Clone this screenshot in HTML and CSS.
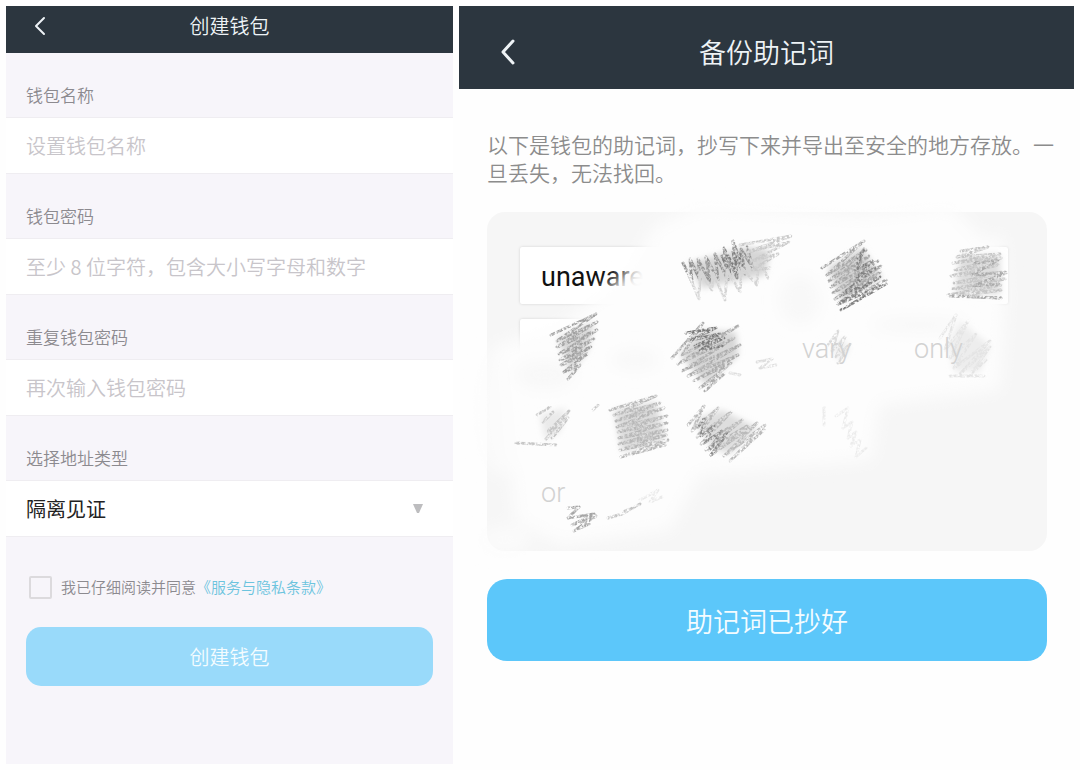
FILE: index.html
```
<!DOCTYPE html>
<html lang="zh-CN">
<head>
    <meta charset="UTF-8">
    <meta name="viewport" content="width=device-width, initial-scale=1.0">
    <title>创建钱包</title>
    <link rel="stylesheet" href="styles.css">
</head>
<body>

<div class="container">
    <!-- Create wallet -->
    <section class="create-section">
        <header class="top-bar">
            <button type="button" class="back-button" aria-label="返回">
                <svg width="12" height="20" viewBox="0 0 12 20"><path d="M10 2L2 10L10 18"/></svg>
            </button>
            <h1>创建钱包</h1>
        </header>
        <form id="create-form">
            <label class="field-label" for="wallet-name">钱包名称</label>
            <input type="text" id="wallet-name" class="input-field" placeholder="设置钱包名称">

            <label class="field-label" for="password">钱包密码</label>
            <input type="password" id="password" class="input-field" placeholder="至少 8 位字符，包含大小写字母和数字">

            <label class="field-label" for="password-repeat">重复钱包密码</label>
            <input type="password" id="password-repeat" class="input-field" placeholder="再次输入钱包密码">

            <label class="field-label" for="address-type">选择地址类型</label>
            <div class="select-wrap">
                <select id="address-type" class="input-field">
                    <option>隔离见证</option>
                </select>
                <svg class="select-arrow" width="10" height="9" viewBox="0 0 10 9"><path d="M0 0H10L6 9H4Z"/></svg>
            </div>

            <div class="terms">
                <input type="checkbox" id="agree">
                <label for="agree">我已仔细阅读并同意</label><a href="#">《服务与隐私条款》</a>
            </div>
            <button type="submit" class="create-button">创建钱包</button>
        </form>
    </section>

    <!-- Backup mnemonic -->
    <section class="backup-section">
        <header class="top-bar top-bar-large">
            <button type="button" class="back-button" aria-label="返回">
                <svg width="15" height="26" viewBox="0 0 15 26"><path d="M13 2L3 13L13 24"/></svg>
            </button>
            <h1>备份助记词</h1>
        </header>
        <p class="hint">以下是钱包的助记词，抄写下来并导出至安全的地方存放。一旦丢失，无法找回。</p>

        <div class="mnemonic">
            <ul class="words">
                <li>unaware</li><li></li><li></li><li></li>
                <li></li><li></li><li class="faint">vary</li><li class="faint">only</li>
                <li></li><li class="blank"></li><li class="blank"></li><li class="blank"></li>
                <li class="faint">or</li>
            </ul>
            <!-- Smudges and pencil strokes over the words -->
            <svg class="scribbles" viewBox="487 212 560 339" preserveAspectRatio="none" aria-hidden="true">
                <defs>
                    <filter id="haze" x="-20%" y="-20%" width="140%" height="140%">
                        <feGaussianBlur stdDeviation="8"/>
                    </filter>
                    <filter id="smudge" x="-20%" y="-20%" width="140%" height="140%">
                        <feGaussianBlur stdDeviation="3"/>
                    </filter>
                    <filter id="pencil" x="-10%" y="-10%" width="120%" height="120%">
                        <feTurbulence type="fractalNoise" baseFrequency="0.4" numOctaves="3" seed="4" result="noise"/>
                        <feColorMatrix in="noise" type="matrix" values="0 0 0 0 0  0 0 0 0 0  0 0 0 0 0  0 0 0 3 -0.9" result="grain"/>
                        <feComposite in="SourceGraphic" in2="grain" operator="in" result="drawn"/>
                        <feGaussianBlur in="drawn" stdDeviation="0.7"/>
                    </filter>
                </defs>
                <g filter="url(#haze)" fill="#fdfdfd">
                    <path d="M655 225L700 205L860 215L950 205L985 240L1003 235L1006 300L1000 390L880 405L872 460L780 468L700 475L670 530L560 545L515 520L505 400L498 345L560 326L600 295L625 275Z"/>
                    <ellipse cx="500" cy="410" rx="22" ry="65" opacity="0.8"/>
                    <ellipse cx="505" cy="540" rx="25" ry="14" opacity="0.8"/>
                </g>
                <g filter="url(#haze)" fill="#f8f8f8">
                    <ellipse cx="545" cy="375" rx="30" ry="14"/>
                    <ellipse cx="800" cy="300" rx="20" ry="24"/>
                    <ellipse cx="635" cy="360" rx="24" ry="10"/>
                    <ellipse cx="920" cy="325" rx="50" ry="8"/>
                </g>
                <!-- rubbed-in graphite under the strokes -->
                <g filter="url(#smudge)">
                    <path fill="#d6d6d6" d="M687 264L745 247L770 250L765 275L702 288Z"/>
                    <path fill="#d2d2d2" d="M828 268L862 248L882 278L842 302Z"/>
                    <path fill="#dedede" d="M960 256L1000 255L1000 294L955 293Z"/>
                    <path fill="#d8d8d8" d="M558 338L594 322L588 350L570 374Z"/>
                    <path fill="#d6d6d6" d="M680 355L700 330L736 332L738 355L706 385Z"/>
                    <path fill="#dcdcdc" d="M614 410L656 402L665 440L622 452Z"/>
                    <path fill="#dedede" d="M694 420L722 410L758 428L730 454L712 448Z"/>
                    <path fill="#ededed" d="M948 345L960 322L990 345L980 372L955 372Z"/>
                    <path fill="#eee" d="M832 350L842 338L850 348L840 362Z"/>
                    <path fill="#eaeaea" d="M540 415L566 408L560 432L545 440Z"/>
                </g>
                <g class="strokes" filter="url(#pencil)">
                    <!-- row 1 -->
                    <path stroke="#929292" d="M683 263L692 282L690 259L700 280L698 259L710 282L706 257L718 280L715 254L728 280L724 248L737 278L733 241L745 274L741 249L753 268L747 247"/>
                    <path stroke="#7d7d7d" d="M722 256L730 275L727 254L737 274L733 252L743 272L739 253"/>
                    <path stroke="#d4d4d4" d="M689 275L699 299L700 272L712 290L713 273L725 300L727 270L740 292L742 268L757 285L758 258L768 278"/>
                    <path stroke="#cacaca" d="M740 245L791 236L748 252L789 242L752 261L778 254L752 270L770 268"/>
                    <path stroke="#a8a8a8" d="M822 268L864 241L827 275L866 250L829 281L869 256L831 287L878 261L833 293L881 266L835 299L880 272L838 304L886 280"/>
                    <path stroke="#828282" d="M858 258L864 249L855 270L872 261L856 279L875 268L840 296L880 277L838 304L886 284L841 310"/>
                    <path stroke="#c4c4c4" d="M961 251L988 247L957 257L1000 254L953 263L1001 258L955 270L998 265L951 276L1005 272L954 283L1005 279L952 289L1001 285L948 295L1001 290L960 296L1001 298"/>
                    <path stroke="#aaa" d="M975 263L998 260L972 275L1006 273L974 286L999 284M950 296L1001 298"/>
                    <!-- row 2 -->
                    <path stroke="#a2a2a2" d="M551 335L596 314L557 341L597 322L557 347L597 330L559 354L594 339L560 360L591 347L561 365L587 354L564 372L580 365L568 379L576 370"/>
                    <path stroke="#acacac" d="M672 358L703 323L682 355L738 326L678 364L734 338L682 371L740 345L688 376L738 355L694 381L731 363L700 388L724 374L705 391"/>
                    <path stroke="#7a7a7a" d="M686 333L716 328L691 340L720 334L695 346L724 338L700 350L722 346"/>
                    <path stroke="#dedede" d="M757 362L772 359L760 368L776 365M730 373L740 375"/>
                    <path stroke="#dadada" d="M828 345L838 331L832 351L845 337L836 357L850 344L838 363"/>
                    <path stroke="#e4e4e4" d="M940 338L956 315L945 350L968 321L950 358L976 334L954 368L990 341L960 374L990 347L970 375L986 360M950 376H984"/>
                    <!-- row 3 -->
                    <path stroke="#c6c6c6" d="M516 443L556 445M546 439L569 411L548 431L568 418L552 438M537 415L550 407M543 422L553 412M593 410L598 405"/>
                    <path stroke="#b8b8b8" d="M610 410L656 396L614 415L660 403L616 421L664 408L617 427L667 416L618 432L667 423L619 438L667 430L619 444L666 435L620 450L668 440L621 457L665 445"/>
                    <path stroke="#bababa" d="M688 425L704 406L692 431L718 408L697 437L731 412L701 444L742 420L706 450L747 426L711 455L757 423L724 456L765 425L730 461L764 430"/>
                    <path stroke="#8e8e8e" d="M698 427L704 419L701 436L714 426L704 443L722 431L709 450L728 432L711 455"/>
                    <path stroke="#ececec" d="M824 407V425M836 416L848 408L843 428L852 422L848 438L856 432L851 446L860 440L856 457L866 448"/>
                    <!-- row 4 -->
                    <path stroke="#a6a6a6" d="M568 508L579 507L568 518L594 514L572 525L596 516L574 531L589 524"/>
                    <path stroke="#c4c4c4" d="M608 518L622 514L640 504M625 511L633 508"/>
                    <path stroke="#eaeaea" d="M640 500L658 490L650 502L662 497"/>
                </g>
            </svg>
        </div>

        <button type="button" class="done-button">助记词已抄好</button>
    </section>
</div>

</body>
</html>
```

FILE: styles.css
```
* {
    box-sizing: border-box;
}

body {
    font-family: "Noto Sans CJK SC", sans-serif;
    font-weight: 350;
    margin: 0;
    padding: 6px;
    background-color: #fefefe;
}

button,
input,
select {
    font-family: inherit;
    font-weight: inherit;
}

.container {
    display: grid;
    grid-template-columns: 447fr 615fr;
    gap: 6px;
    min-height: calc(100vh - 12px);
}

.create-section {
    background-color: #f7f5fa;
}

.top-bar {
    display: grid;
    grid-template-columns: 60px 1fr 60px;
    align-items: center;
    height: 47px;
    padding-bottom: 8px;
    background-color: #2c363f;
    color: #eef3f6;
}

.top-bar h1 {
    grid-column: 2;
    margin: 0;
    font-size: 20px;
    font-weight: inherit;
    line-height: 28px;
    text-align: center;
}

.top-bar-large {
    grid-template-columns: 88px 1fr 88px;
    height: 83px;
    padding: 8px 0 0;
}

.top-bar-large h1 {
    font-size: 27px;
    line-height: 40px;
}

.back-button {
    display: flex;
    align-items: center;
    justify-content: center;
    margin-left: 8px;
    padding: 0;
    background: none;
    border: none;
    cursor: pointer;
}

.back-button svg {
    fill: none;
    stroke: #eef3f6;
    stroke-width: 2;
    stroke-linecap: round;
    stroke-linejoin: round;
}

.top-bar-large .back-button svg {
    stroke-width: 3;
}

.field-label {
    display: block;
    padding: 30px 20px 10px;
    font-size: 17px;
    line-height: 24px;
    color: #8c8a8f;
}

.input-field {
    display: block;
    width: 100%;
    height: 57px;
    padding: 0 20px;
    border: 1px solid #efedf1;
    border-width: 1px 0;
    border-radius: 0;
    background-color: #fff;
    font-size: 20px;
    color: #222;
    outline: none;
}

.input-field::placeholder {
    color: #c8c5ca;
    opacity: 1;
}

.select-wrap {
    position: relative;
}

.select-wrap select {
    appearance: none;
    font-weight: 400;
}

.select-arrow {
    position: absolute;
    right: 30px;
    top: 24px;
    fill: #bdbdbf;
    pointer-events: none;
}

.terms {
    display: flex;
    align-items: center;
    padding: 38px 20px 28px 23px;
    font-size: 15px;
    line-height: 24px;
    color: #8c8a8f;
}

.terms input {
    appearance: none;
    width: 23px;
    height: 23px;
    margin: 0 9px 0 0;
    border: 2px solid #dcdadd;
    border-radius: 2px;
}

.terms a {
    color: #6cc4de;
    text-decoration: none;
}

.create-button,
.done-button {
    display: block;
    border: none;
    color: #f4fcff;
    cursor: pointer;
}

.create-button {
    width: calc(100% - 40px);
    height: 59px;
    margin: 0 20px;
    border-radius: 15px;
    background-color: #99dafa;
    font-size: 20px;
}

.hint {
    margin: 41px 16px 26px 28px;
    font-size: 21px;
    line-height: 28px;
    color: #8c8c8c;
}

.mnemonic {
    position: relative;
    margin: 0 27px 28px 28px;
    border-radius: 18px;
    background-color: #f6f6f6;
}

.words {
    display: grid;
    grid-template-columns: 146px 1fr 100px 104px;
    gap: 15px 12px;
    margin: 0;
    padding: 35px 39px 31px 33px;
    list-style: none;
    font-family: Roboto, sans-serif;
    font-size: 27px;
    font-weight: 400;
    color: #111;
}

.words li {
    height: 57px;
    padding-left: 10px;
    border-radius: 2px;
    background-color: #fff;
    box-shadow: 0 0 3px rgba(0, 0, 0, 0.15);
    line-height: 61px;
}

.words li:nth-child(4n + 1) {
    padding-left: 21px;
}

/* words that still show through the smudges */
.words .faint {
    position: relative;
    z-index: 1;
    background: none;
    box-shadow: none;
    font-weight: 300;
    color: #d2d2d2;
}

.words .blank {
    visibility: hidden;
}

.scribbles {
    position: absolute;
    top: 0;
    left: 0;
    width: 100%;
    height: 100%;
    overflow: visible;
}

.strokes {
    fill: none;
    stroke-width: 3;
    stroke-linecap: round;
    stroke-linejoin: round;
}

.done-button {
    width: calc(100% - 55px);
    height: 82px;
    margin: 0 27px 0 28px;
    border-radius: 20px;
    background-color: #5cc7fa;
    font-size: 27px;
}
```
